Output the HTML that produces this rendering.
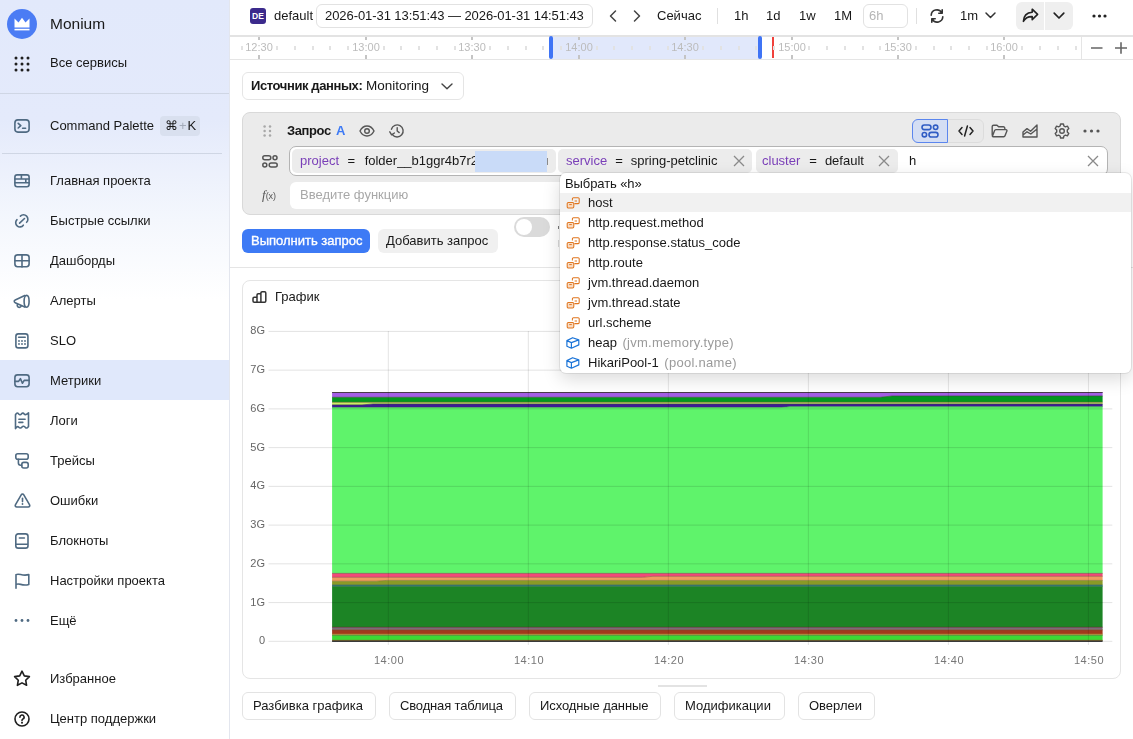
<!DOCTYPE html>
<html><head><meta charset="utf-8">
<style>
*{box-sizing:border-box;margin:0;padding:0}
html,body{width:1133px;height:739px;overflow:hidden;background:#fff}
body{position:relative;font-family:"Liberation Sans",sans-serif;font-size:13px;color:#181818}
.a{position:absolute}
.t{position:absolute;white-space:nowrap;line-height:20px;font-size:13px;will-change:transform}
svg{position:absolute;overflow:visible}
#side{position:absolute;left:0;top:0;width:230px;height:739px;border-right:1px solid #e3e6ee;
 background:linear-gradient(180deg,#e2e9fb 0px,#e4eafb 120px,#f4f7fd 220px,#ffffff 300px)}
.ic{stroke:#4f6a82;fill:none;stroke-width:1.6;stroke-linecap:round;stroke-linejoin:round}
.sep{position:absolute;height:1px;background:#cfd6e4}
</style></head>
<body>
<div id="side">
  <!-- logo -->
  <div class="a" style="left:7px;top:8.5px;width:30px;height:30px;border-radius:50%;background:#4b7cf4"></div>
  <svg style="left:14px;top:17px" width="16" height="14" viewBox="0 0 16 14">
    <path d="M0.5 1.5 L4.5 5.5 L8 0.8 L11.5 5.5 L15.5 1.5 L15.5 10.5 L0.5 10.5 Z" fill="#fff"/>
    <rect x="0.5" y="11.8" width="15" height="1.6" fill="#fff"/>
  </svg>
  <div class="t" style="left:50px;top:14px;font-size:15.5px">Monium</div>
  <!-- grid dots -->
  <svg style="left:14px;top:56px" width="16" height="16" viewBox="0 0 16 16" fill="#1f1f1f">
    <circle cx="2" cy="2" r="1.5"/><circle cx="8" cy="2" r="1.5"/><circle cx="14" cy="2" r="1.5"/>
    <circle cx="2" cy="8" r="1.5"/><circle cx="8" cy="8" r="1.5"/><circle cx="14" cy="8" r="1.5"/>
    <circle cx="2" cy="14" r="1.5"/><circle cx="8" cy="14" r="1.5"/><circle cx="14" cy="14" r="1.5"/>
  </svg>
  <div class="t" style="left:50px;top:53px">Все сервисы</div>
  <div class="sep" style="left:0;top:93px;width:229px"></div>
  <!-- command palette -->
  <svg style="left:14px;top:119px" width="16" height="14" viewBox="0 0 16 14">
    <rect class="ic" x="0.9" y="0.9" width="14.2" height="12.2" rx="3" stroke-width="1.8"/>
    <path class="ic" d="M4.2 4.4 L6.8 6.7 L4.2 9" stroke-width="1.6"/>
    <path class="ic" d="M8.6 9.3 H11.6" stroke-width="1.5"/>
  </svg>
  <div class="t" style="left:50px;top:116px">Command Palette</div>
  <div class="a" style="left:160px;top:116px;width:40px;height:20px;border-radius:4px;background:#d9e0ef"></div>
  <div class="t" style="left:165px;top:116px;font-size:13px">⌘<span style="color:#a3abba;margin:0 1px">+</span>K</div>
  <div class="sep" style="left:2px;top:153px;width:220px"></div>
  <!-- nav -->
  <div class="a" style="left:0;top:360px;width:229px;height:40px;background:#e0e8fb"></div>
  <div class="t" style="left:50px;top:171px">Главная проекта</div>
  <div class="t" style="left:50px;top:211px">Быстрые ссылки</div>
  <div class="t" style="left:50px;top:251px">Дашборды</div>
  <div class="t" style="left:50px;top:291px">Алерты</div>
  <div class="t" style="left:50px;top:331px">SLO</div>
  <div class="t" style="left:50px;top:371px">Метрики</div>
  <div class="t" style="left:50px;top:411px">Логи</div>
  <div class="t" style="left:50px;top:451px">Трейсы</div>
  <div class="t" style="left:50px;top:491px">Ошибки</div>
  <div class="t" style="left:50px;top:531px">Блокноты</div>
  <div class="t" style="left:50px;top:571px">Настройки проекта</div>
  <div class="t" style="left:50px;top:611px">Ещё</div>
  <div class="t" style="left:50px;top:669px">Избранное</div>
  <div class="t" style="left:50px;top:709px">Центр поддержки</div>
  <!-- ICONS -->
  <svg style="left:14px;top:174px" width="16" height="14" viewBox="0 0 16 14">
    <rect class="ic" x="0.9" y="0.9" width="14.2" height="11.8" rx="2.2" stroke-width="1.8"/>
    <path class="ic" d="M1 5 H15 M1 8.8 H15 M7.4 1 V5 M11.8 5 V8.8" stroke-width="1.6"/>
  </svg>
  <svg style="left:14px;top:212px" width="16" height="16" viewBox="0 0 16 16"><path class="ic" d="M6.4 4.1 A4.2 4.2 0 1 1 12.6 10.3 M3.0 7.7 A4.2 4.2 0 1 0 9.3 13.2 M5.6 11.1 L10.5 6.5" stroke-width="1.6"/></svg>
  <svg style="left:14px;top:254px" width="16" height="14" viewBox="0 0 16 14">
    <rect class="ic" x="0.9" y="0.9" width="14.2" height="11.8" rx="2.6" stroke-width="1.8"/>
    <path class="ic" d="M1 6.8 H15 M8 1 V13" stroke-width="1.7"/>
  </svg>
  <svg style="left:12px;top:293px" width="18" height="16" viewBox="0 0 18 16"><path class="ic" d="M12.8 2.6 L3.2 6.9 A1.5 1.5 0 0 0 3.2 9.7 L12.8 14.1" stroke-width="1.5"/><ellipse class="ic" cx="14.6" cy="8.3" rx="2.5" ry="5.9" stroke-width="1.5"/><path class="ic" d="M5.4 11.6 A2 2 0 1 0 9.2 12.8" stroke-width="1.5"/></svg>
  <svg style="left:15px;top:333px" width="14" height="16" viewBox="0 0 14 16">
    <rect class="ic" x="0.9" y="0.9" width="12" height="14" rx="2.4" stroke-width="1.7"/>
    <path class="ic" d="M3.6 4.2 H10.2" stroke-width="1.8"/>
    <g fill="#4f6a82"><circle cx="4" cy="8" r="0.9"/><circle cx="7" cy="8" r="0.9"/><circle cx="10" cy="8" r="0.9"/><circle cx="4" cy="11" r="0.9"/><circle cx="7" cy="11" r="0.9"/><circle cx="10" cy="11" r="0.9"/></g>
  </svg>
  <svg style="left:14px;top:374px" width="16" height="14" viewBox="0 0 16 14">
    <rect class="ic" x="0.9" y="0.9" width="14.2" height="11.8" rx="2.6" stroke-width="1.8"/>
    <path class="ic" d="M1 7.4 H4.6 L6.4 4.6 L8.4 9.2 L10.2 6.4 H15" stroke-width="1.5"/>
  </svg>
  <svg style="left:14px;top:412px" width="16" height="18" viewBox="0 0 16 18"><path class="ic" d="M1.5 16.6 V2.6 C2.3 1.2 3.3 0.6 4.2 1.4 C5.2 2.6 6.4 3.4 7.6 1.8 C8.4 0.7 9.4 1 10.2 2 C11.2 3.3 12.6 2.6 14.5 0.8 V14.6 C13.6 15.8 12.4 16.6 11.4 15.4 C10.4 14.2 9 13.8 8 15 C7 16.2 5.8 16.4 4.8 15.2 C3.8 14 2.8 14.6 1.5 16.6 Z M4.9 7.2 H11.1 M4.9 10.4 H8.8" stroke-width="1.6"/></svg>
  <svg style="left:15px;top:453px" width="14" height="16" viewBox="0 0 14 16">
    <rect class="ic" x="0.8" y="0.8" width="12.4" height="5.4" rx="2" stroke-width="1.6"/>
    <rect class="ic" x="6.8" y="9.4" width="6.4" height="5.6" rx="2" stroke-width="1.6"/>
    <path class="ic" d="M3.4 6.2 V10 A2.2 2.2 0 0 0 5.6 12.2 H6.8" stroke-width="1.6"/>
  </svg>
  <svg style="left:14px;top:493px" width="17" height="15" viewBox="0 0 17 15">
    <path class="ic" d="M7.2 1.8 A1.5 1.5 0 0 1 9.8 1.8 L15.6 11.8 A1.5 1.5 0 0 1 14.3 14 H2.7 A1.5 1.5 0 0 1 1.4 11.8 Z" stroke-width="1.6"/>
    <path class="ic" d="M8.5 5.4 V8.6" stroke-width="1.6"/>
    <circle cx="8.5" cy="11" r="0.9" fill="#4f6a82"/>
  </svg>
  <svg style="left:15px;top:533px" width="14" height="16" viewBox="0 0 14 16">
    <path class="ic" d="M3.2 0.9 H10.6 A2.4 2.4 0 0 1 13 3.3 V12.7 A2.4 2.4 0 0 1 10.6 15.1 H3.2 A2.4 2.4 0 0 1 0.8 12.7 V3.3 A2.4 2.4 0 0 1 3.2 0.9 Z M1 11.2 H13 M4.4 5 H9.4" stroke-width="1.6"/>
  </svg>
  <svg style="left:15px;top:573px" width="15" height="16" viewBox="0 0 15 16">
    <path class="ic" d="M1 15.2 V1.6 C4.5 -0.2 7 3.6 13.8 1.6 V11.4 C7 13.4 4.5 9.6 1 11.4" stroke-width="1.6"/>
  </svg>
  <svg style="left:14px;top:618px" width="16" height="5" viewBox="0 0 16 5" fill="#4f6a82">
    <circle cx="2" cy="2.5" r="1.4"/><circle cx="8" cy="2.5" r="1.4"/><circle cx="14" cy="2.5" r="1.4"/>
  </svg>
  <svg style="left:13px;top:670px" width="18" height="17" viewBox="0 0 18 17">
    <path d="M9 1.2 L11.3 5.9 L16.4 6.6 L12.7 10.2 L13.6 15.3 L9 12.9 L4.4 15.3 L5.3 10.2 L1.6 6.6 L6.7 5.9 Z" fill="none" stroke="#1f1f1f" stroke-width="1.6" stroke-linejoin="round"/>
  </svg>
  <svg style="left:14px;top:711px" width="16" height="16" viewBox="0 0 16 16">
    <circle cx="8" cy="8" r="7" fill="none" stroke="#1f1f1f" stroke-width="1.6"/>
    <path d="M5.9 6.2 A2.1 2.1 0 1 1 8.8 8.1 C8.2 8.4 8 8.8 8 9.6" fill="none" stroke="#1f1f1f" stroke-width="1.6" stroke-linecap="round"/>
    <circle cx="8" cy="11.7" r="1" fill="#1f1f1f"/>
  </svg>
</div>
<!-- MAIN -->
<!-- top bar -->
<div class="a" style="left:250px;top:8px;width:16px;height:16px;border-radius:3px;background:#3b2a8c;color:#fff;font-size:8.5px;font-weight:bold;line-height:16px;text-align:center">DE</div>
<div class="t" style="left:274px;top:5.5px">default</div>
<div class="a" style="left:316px;top:4px;width:277px;height:24px;border:1px solid #e2e2e2;border-radius:6px"></div>
<div class="t" style="left:324.5px;top:5.5px;letter-spacing:-0.07px">2026-01-31 13:51:43 — 2026-01-31 14:51:43</div>
<svg style="left:609px;top:10px" width="8" height="12" viewBox="0 0 8 12"><path d="M6.5 1 L1.5 6 L6.5 11" fill="none" stroke="#444" stroke-width="1.5" stroke-linecap="round" stroke-linejoin="round"/></svg>
<svg style="left:633px;top:10px" width="8" height="12" viewBox="0 0 8 12"><path d="M1.5 1 L6.5 6 L1.5 11" fill="none" stroke="#444" stroke-width="1.5" stroke-linecap="round" stroke-linejoin="round"/></svg>
<div class="t" style="left:657px;top:5.5px">Сейчас</div>
<div class="a" style="left:717px;top:8px;width:1px;height:16px;background:#e0e0e0"></div>
<div class="t" style="left:734px;top:5.5px">1h</div>
<div class="t" style="left:766px;top:5.5px">1d</div>
<div class="t" style="left:799px;top:5.5px">1w</div>
<div class="t" style="left:834px;top:5.5px">1M</div>
<div class="a" style="left:863px;top:4px;width:45px;height:24px;border:1px solid #e2e2e2;border-radius:6px"></div>
<div class="t" style="left:869px;top:5.5px;color:#b5b5b5">6h</div>
<div class="a" style="left:916px;top:8px;width:1px;height:16px;background:#e0e0e0"></div>
<svg style="left:929px;top:9px" width="16" height="14" viewBox="0 0 16 14"><path d="M2.2 6.2 A5.6 5.6 0 0 1 12.6 3.6 M13.8 7.8 A5.6 5.6 0 0 1 3.4 10.4 M13.2 0.8 V4.2 H9.8 M2.8 13.2 V9.8 H6.2" fill="none" stroke="#333" stroke-width="1.6" stroke-linecap="round" stroke-linejoin="round"/></svg>
<div class="t" style="left:960px;top:5.5px">1m</div>
<svg style="left:985px;top:12px" width="11" height="7" viewBox="0 0 11 7"><path d="M1 1 L5.5 5.5 L10 1" fill="none" stroke="#333" stroke-width="1.5" stroke-linecap="round" stroke-linejoin="round"/></svg>
<div class="a" style="left:1016px;top:2px;width:57px;height:28px;border-radius:6px;background:#efefef"></div>
<div class="a" style="left:1044px;top:2px;width:1px;height:28px;background:#fff"></div>
<svg style="left:1022px;top:8px" width="17" height="15" viewBox="0 0 17 15"><path d="M10.2 1.2 L15.6 6.4 L10.2 11.6 V8.6 C6 8.4 3.4 9.8 1.4 13.4 C1.6 7.6 4.6 4.6 10.2 4.2 Z" fill="none" stroke="#222" stroke-width="1.6" stroke-linejoin="round"/></svg>
<svg style="left:1053px;top:12px" width="12" height="8" viewBox="0 0 12 8"><path d="M1.2 1.2 L6 6 L10.8 1.2" fill="none" stroke="#222" stroke-width="1.7" stroke-linecap="round" stroke-linejoin="round"/></svg>
<svg style="left:1092px;top:14px" width="15" height="4" viewBox="0 0 15 4" fill="#222"><circle cx="2" cy="2" r="1.6"/><circle cx="7.5" cy="2" r="1.6"/><circle cx="13" cy="2" r="1.6"/></svg>
<!-- timeline -->
<div class="a" style="left:230px;top:35px;width:903px;height:25px;border-top:2px solid #e3e3e3;border-bottom:1px solid #e5e5e5"></div>
<div class="a" style="left:553px;top:37px;width:206px;height:22px;background:#e1e8fb"></div>
<div class="a" style="left:549px;top:36px;width:4px;height:23px;border-radius:2px;background:#3f74f5"></div>
<div class="a" style="left:758px;top:36px;width:4px;height:23px;border-radius:2px;background:#3f74f5"></div>
<div class="a" style="left:772px;top:37px;width:2px;height:21px;background:#f0423c"></div>
<div class="a" style="left:1081px;top:37px;width:1px;height:22px;background:#e5e5e5"></div>
<svg style="left:1090px;top:42px" width="38" height="12" viewBox="0 0 38 12"><path d="M1 6 H12.5 M25 6 H37 M31 0.2 V11.8" fill="none" stroke="#666" stroke-width="1.6"/></svg>
<div id="ticks">
<div class="a" style="left:240.7px;top:46px;width:2px;height:4px;background:#e2e2e2"></div>
<div class="a" style="left:258.2px;top:37px;width:2px;height:3px;background:#c4c4c4"></div>
<div class="a" style="left:258.2px;top:55px;width:2px;height:4px;background:#c4c4c4"></div>
<div class="t" style="left:239.2px;top:37px;width:40px;text-align:center;font-size:11px;color:#bcbcbc">12:30</div>
<div class="a" style="left:276.2px;top:46px;width:2px;height:4px;background:#e2e2e2"></div>
<div class="a" style="left:293.9px;top:46px;width:2px;height:4px;background:#e2e2e2"></div>
<div class="a" style="left:311.7px;top:46px;width:2px;height:4px;background:#e2e2e2"></div>
<div class="a" style="left:329.4px;top:46px;width:2px;height:4px;background:#e2e2e2"></div>
<div class="a" style="left:347.2px;top:46px;width:2px;height:4px;background:#e2e2e2"></div>
<div class="a" style="left:364.6px;top:37px;width:2px;height:3px;background:#c4c4c4"></div>
<div class="a" style="left:364.6px;top:55px;width:2px;height:4px;background:#c4c4c4"></div>
<div class="t" style="left:345.6px;top:37px;width:40px;text-align:center;font-size:11px;color:#bcbcbc">13:00</div>
<div class="a" style="left:382.6px;top:46px;width:2px;height:4px;background:#e2e2e2"></div>
<div class="a" style="left:400.4px;top:46px;width:2px;height:4px;background:#e2e2e2"></div>
<div class="a" style="left:418.1px;top:46px;width:2px;height:4px;background:#e2e2e2"></div>
<div class="a" style="left:435.9px;top:46px;width:2px;height:4px;background:#e2e2e2"></div>
<div class="a" style="left:453.6px;top:46px;width:2px;height:4px;background:#e2e2e2"></div>
<div class="a" style="left:471.1px;top:37px;width:2px;height:3px;background:#c4c4c4"></div>
<div class="a" style="left:471.1px;top:55px;width:2px;height:4px;background:#c4c4c4"></div>
<div class="t" style="left:452.1px;top:37px;width:40px;text-align:center;font-size:11px;color:#bcbcbc">13:30</div>
<div class="a" style="left:489.1px;top:46px;width:2px;height:4px;background:#e2e2e2"></div>
<div class="a" style="left:506.8px;top:46px;width:2px;height:4px;background:#e2e2e2"></div>
<div class="a" style="left:524.6px;top:46px;width:2px;height:4px;background:#e2e2e2"></div>
<div class="a" style="left:542.3px;top:46px;width:2px;height:4px;background:#e2e2e2"></div>
<div class="a" style="left:560.1px;top:46px;width:2px;height:4px;background:#e2e2e2"></div>
<div class="a" style="left:577.5px;top:37px;width:2px;height:3px;background:#c4c4c4"></div>
<div class="a" style="left:577.5px;top:55px;width:2px;height:4px;background:#c4c4c4"></div>
<div class="t" style="left:558.5px;top:37px;width:40px;text-align:center;font-size:11px;color:#bcbcbc">14:00</div>
<div class="a" style="left:595.5px;top:46px;width:2px;height:4px;background:#e2e2e2"></div>
<div class="a" style="left:613.3px;top:46px;width:2px;height:4px;background:#e2e2e2"></div>
<div class="a" style="left:631.0px;top:46px;width:2px;height:4px;background:#e2e2e2"></div>
<div class="a" style="left:648.8px;top:46px;width:2px;height:4px;background:#e2e2e2"></div>
<div class="a" style="left:666.5px;top:46px;width:2px;height:4px;background:#e2e2e2"></div>
<div class="a" style="left:684.0px;top:37px;width:2px;height:3px;background:#c4c4c4"></div>
<div class="a" style="left:684.0px;top:55px;width:2px;height:4px;background:#c4c4c4"></div>
<div class="t" style="left:665.0px;top:37px;width:40px;text-align:center;font-size:11px;color:#bcbcbc">14:30</div>
<div class="a" style="left:702.0px;top:46px;width:2px;height:4px;background:#e2e2e2"></div>
<div class="a" style="left:719.7px;top:46px;width:2px;height:4px;background:#e2e2e2"></div>
<div class="a" style="left:737.5px;top:46px;width:2px;height:4px;background:#e2e2e2"></div>
<div class="a" style="left:755.2px;top:46px;width:2px;height:4px;background:#e2e2e2"></div>
<div class="a" style="left:773.0px;top:46px;width:2px;height:4px;background:#e2e2e2"></div>
<div class="a" style="left:790.5px;top:37px;width:2px;height:3px;background:#c4c4c4"></div>
<div class="a" style="left:790.5px;top:55px;width:2px;height:4px;background:#c4c4c4"></div>
<div class="t" style="left:771.5px;top:37px;width:40px;text-align:center;font-size:11px;color:#bcbcbc">15:00</div>
<div class="a" style="left:808.4px;top:46px;width:2px;height:4px;background:#e2e2e2"></div>
<div class="a" style="left:826.2px;top:46px;width:2px;height:4px;background:#e2e2e2"></div>
<div class="a" style="left:843.9px;top:46px;width:2px;height:4px;background:#e2e2e2"></div>
<div class="a" style="left:861.7px;top:46px;width:2px;height:4px;background:#e2e2e2"></div>
<div class="a" style="left:879.4px;top:46px;width:2px;height:4px;background:#e2e2e2"></div>
<div class="a" style="left:896.9px;top:37px;width:2px;height:3px;background:#c4c4c4"></div>
<div class="a" style="left:896.9px;top:55px;width:2px;height:4px;background:#c4c4c4"></div>
<div class="t" style="left:877.9px;top:37px;width:40px;text-align:center;font-size:11px;color:#bcbcbc">15:30</div>
<div class="a" style="left:914.9px;top:46px;width:2px;height:4px;background:#e2e2e2"></div>
<div class="a" style="left:932.6px;top:46px;width:2px;height:4px;background:#e2e2e2"></div>
<div class="a" style="left:950.4px;top:46px;width:2px;height:4px;background:#e2e2e2"></div>
<div class="a" style="left:968.1px;top:46px;width:2px;height:4px;background:#e2e2e2"></div>
<div class="a" style="left:985.9px;top:46px;width:2px;height:4px;background:#e2e2e2"></div>
<div class="a" style="left:1003.4px;top:37px;width:2px;height:3px;background:#c4c4c4"></div>
<div class="a" style="left:1003.4px;top:55px;width:2px;height:4px;background:#c4c4c4"></div>
<div class="t" style="left:984.4px;top:37px;width:40px;text-align:center;font-size:11px;color:#bcbcbc">16:00</div>
<div class="a" style="left:1021.3px;top:46px;width:2px;height:4px;background:#e2e2e2"></div>
<div class="a" style="left:1039.1px;top:46px;width:2px;height:4px;background:#e2e2e2"></div>
<div class="a" style="left:1056.8px;top:46px;width:2px;height:4px;background:#e2e2e2"></div>
<div class="a" style="left:1074.6px;top:46px;width:2px;height:4px;background:#e2e2e2"></div>
</div>
<!-- MAIN2 -->
<!-- data source -->
<div class="a" style="left:242px;top:72px;width:222px;height:28px;border:1px solid #e5e5e5;border-radius:6px"></div>
<div class="t" style="left:251px;top:75.5px"><b style="letter-spacing:-0.4px">Источник данных:</b> <span style="font-size:13.5px">Monitoring</span></div>
<svg style="left:441px;top:83px" width="12" height="7" viewBox="0 0 12 7"><path d="M1 1 L6 5.8 L11 1" fill="none" stroke="#444" stroke-width="1.4" stroke-linecap="round" stroke-linejoin="round"/></svg>
<!-- query box -->
<div class="a" style="left:242px;top:112px;width:879px;height:103px;border:1px solid #d9d9d9;border-radius:8px;background:#ebebeb"></div>
<svg style="left:263px;top:125px" width="9" height="12" viewBox="0 0 9 12" fill="#a8a8a8"><circle cx="1.6" cy="1.6" r="1.25"/><circle cx="7" cy="1.6" r="1.25"/><circle cx="1.6" cy="6" r="1.25"/><circle cx="7" cy="6" r="1.25"/><circle cx="1.6" cy="10.4" r="1.25"/><circle cx="7" cy="10.4" r="1.25"/></svg>
<div class="t" style="left:287px;top:120.5px"><b style="letter-spacing:-0.4px">Запрос</b> <b style="color:#3d7af5;margin-left:1.5px">A</b></div>
<svg style="left:359px;top:125px" width="16" height="12" viewBox="0 0 16 12"><path d="M1 6 C3 2 5.5 1 8 1 C10.5 1 13 2 15 6 C13 10 10.5 11 8 11 C5.5 11 3 10 1 6 Z" fill="none" stroke="#555" stroke-width="1.4"/><circle cx="8" cy="6" r="2.3" fill="none" stroke="#555" stroke-width="1.4"/></svg>
<svg style="left:389px;top:124px" width="16" height="14" viewBox="0 0 16 14"><path d="M3.4 10.6 A6 6 0 1 0 2.4 5.2" fill="none" stroke="#555" stroke-width="1.4" stroke-linecap="round"/><path d="M0.8 7.8 L2.6 10.8 L5.4 9" fill="none" stroke="#555" stroke-width="1.4" stroke-linecap="round" stroke-linejoin="round"/><path d="M8.2 3.6 V7 L10.2 8.6" fill="none" stroke="#555" stroke-width="1.4" stroke-linecap="round"/></svg>
<!-- toolbar -->
<div class="a" style="left:912px;top:119px;width:72px;height:24px;border:1px solid #dcdcdc;border-radius:6px;background:#e9e9e9"></div>
<div class="a" style="left:912px;top:119px;width:36px;height:24px;border:1px solid #5b86ee;border-radius:6px 0 0 6px;background:#d4def4"></div>
<svg style="left:921px;top:124px" width="18" height="14" viewBox="0 0 18 14"><rect x="1" y="1" width="9" height="4.6" rx="2.3" fill="none" stroke="#2f5cc4" stroke-width="1.6"/><circle cx="14.6" cy="3.3" r="2.2" fill="none" stroke="#2f5cc4" stroke-width="1.6"/><circle cx="3.4" cy="10.7" r="2.2" fill="none" stroke="#2f5cc4" stroke-width="1.6"/><rect x="8" y="8.4" width="9" height="4.6" rx="2.3" fill="none" stroke="#2f5cc4" stroke-width="1.6"/></svg>
<svg style="left:958px;top:125px" width="16" height="12" viewBox="0 0 16 12"><path d="M4 2.6 L1 6 L4 9.4 M12 2.6 L15 6 L12 9.4 M9.4 1 L6.6 11" fill="none" stroke="#222" stroke-width="1.5" stroke-linecap="round" stroke-linejoin="round"/></svg>
<svg style="left:991px;top:124px" width="17" height="14" viewBox="0 0 17 14"><path d="M1.2 11.6 V2.6 A1.4 1.4 0 0 1 2.6 1.2 H6 L7.6 2.8 H12.4 A1.4 1.4 0 0 1 13.8 4.2 V5.4 M1.4 12.2 L3.6 6.6 A1.4 1.4 0 0 1 4.9 5.6 H15 A1 1 0 0 1 15.9 7 L14 11.8 A1.4 1.4 0 0 1 12.7 12.8 H2 Z" fill="none" stroke="#555" stroke-width="1.4" stroke-linejoin="round"/></svg>
<svg style="left:1022px;top:124px" width="16" height="14" viewBox="0 0 16 14"><path d="M1 13 V8 L5 4.6 L8.6 7.2 L15 1 V13 Z M1 11 L5 7.8 L8.8 10 L15 5" fill="none" stroke="#555" stroke-width="1.4" stroke-linejoin="round"/></svg>
<svg style="left:1054px;top:123px" width="16" height="16" viewBox="0 0 16 16"><path d="M6.6 1 H9.4 L9.9 3 L11.4 3.8 L13.4 3.1 L14.8 5.5 L13.3 7 V8.9 L14.8 10.4 L13.4 12.8 L11.4 12.2 L9.9 13 L9.4 15 H6.6 L6.1 13 L4.6 12.2 L2.6 12.8 L1.2 10.4 L2.7 8.9 V7 L1.2 5.5 L2.6 3.1 L4.6 3.8 L6.1 3 Z" fill="none" stroke="#555" stroke-width="1.4" stroke-linejoin="round"/><circle cx="8" cy="8" r="2.3" fill="none" stroke="#555" stroke-width="1.4"/></svg>
<svg style="left:1083px;top:128.5px" width="17" height="4" viewBox="0 0 17 4" fill="#555"><circle cx="2" cy="2" r="1.6"/><circle cx="8.5" cy="2" r="1.6"/><circle cx="15" cy="2" r="1.6"/></svg>
<!-- filter row -->
<svg style="left:262px;top:155px" width="16" height="13" viewBox="0 0 16 13"><rect x="0.8" y="0.8" width="8" height="4" rx="2" fill="none" stroke="#555" stroke-width="1.5"/><circle cx="13" cy="2.8" r="2" fill="none" stroke="#555" stroke-width="1.5"/><circle cx="2.8" cy="10" r="2" fill="none" stroke="#555" stroke-width="1.5"/><rect x="7.2" y="8" width="8" height="4" rx="2" fill="none" stroke="#555" stroke-width="1.5"/></svg>
<div class="a" style="left:289px;top:146px;width:819px;height:30px;border:1px solid #b4b4b4;border-radius:7px;background:#fff"></div>
<div class="a" style="left:291.5px;top:149px;width:264px;height:24px;border-radius:5px;background:#ececec"></div>
<div class="t" style="left:300px;top:150.5px;width:247px;overflow:hidden"><span style="color:#7a3fb8">project</span><span style="margin:0 9.5px 0 8.5px">=</span>folder__b1ggr4b7r2</div>
<div class="a" style="left:474.5px;top:151.3px;width:72px;height:21px;background:#c9dbf8"></div>
<div class="a" style="left:546.5px;top:158px;width:1.6px;height:7px;background:#8a8a8a"></div>
<div class="a" style="left:558.2px;top:149px;width:194.3px;height:24px;border-radius:5px;background:#ececec"></div>
<div class="t" style="left:566px;top:150.5px"><span style="color:#7a3fb8">service</span><span style="margin:0 8px 0 8px">=</span>spring-petclinic</div>
<svg style="left:733px;top:155px" width="12" height="12" viewBox="0 0 12 12"><path d="M1 1 L11 11 M11 1 L1 11" stroke="#8a8a8a" stroke-width="1.3"/></svg>
<div class="a" style="left:755.5px;top:149px;width:142.5px;height:24px;border-radius:5px;background:#ececec"></div>
<div class="t" style="left:762px;top:150.5px"><span style="color:#7a3fb8">cluster</span><span style="margin:0 8px 0 9px">=</span>default</div>
<svg style="left:878px;top:155px" width="12" height="12" viewBox="0 0 12 12"><path d="M1 1 L11 11 M11 1 L1 11" stroke="#8a8a8a" stroke-width="1.3"/></svg>
<div class="t" style="left:908.5px;top:150.5px">h</div>
<svg style="left:1087px;top:155px" width="12" height="12" viewBox="0 0 12 12"><path d="M1 1 L11 11 M11 1 L1 11" stroke="#8a8a8a" stroke-width="1.3"/></svg>
<!-- function row -->
<div class="t" style="left:262px;top:184.5px;font-family:'Liberation Serif',serif;font-style:italic;font-size:13px;color:#555">f<span style="font-size:9px;font-style:normal;font-family:'Liberation Sans',sans-serif">(x)</span></div>
<div class="a" style="left:290px;top:182px;width:818px;height:27px;border-radius:6px;background:#fff"></div>
<div class="t" style="left:300px;top:185px;color:#a8a8a8">Введите функцию</div>
<!-- buttons -->
<div class="a" style="left:242px;top:229px;width:128px;height:24px;border-radius:6px;background:#3d7af5"></div>
<div class="t" style="left:250.5px;top:231px;color:#fff;-webkit-text-stroke:0.35px #fff">Выполнить запрос</div>
<div class="a" style="left:378px;top:229px;width:119.5px;height:24px;border-radius:6px;background:#f0f0f0"></div>
<div class="t" style="left:386px;top:231px">Добавить запрос</div>
<div class="a" style="left:514px;top:217px;width:36px;height:20px;border-radius:10px;background:#dadada"></div>
<div class="a" style="left:516px;top:219px;width:16px;height:16px;border-radius:50%;background:#fff"></div>
<div class="a" style="left:230px;top:267px;width:903px;height:1px;background:#e5e5e5"></div>
<div class="a" style="left:557.8px;top:225.5px;width:1.3px;height:3.5px;background:#777"></div>
<div class="a" style="left:557.8px;top:240px;width:1.3px;height:6.5px;background:#d8d8d8"></div>
<!-- CHART -->
<div class="a" style="left:242px;top:280px;width:879px;height:399px;border:1px solid #e5e5e5;border-radius:8px"></div>
<svg style="left:251.5px;top:291px" width="15" height="12" viewBox="0 0 15 12"><path d="M5 11.2 H2.2 A1.2 1.2 0 0 1 1 10 V7.4 A1.2 1.2 0 0 1 2.2 6.2 H5 Z M5 11.2 V4 A1.2 1.2 0 0 1 6.2 2.8 H8.9 V11.2 M8.9 11.2 V2 A1.2 1.2 0 0 1 10.1 0.8 H12.6 A1.2 1.2 0 0 1 13.8 2 V10 A1.2 1.2 0 0 1 12.6 11.2 H2.2" fill="none" stroke="#333" stroke-width="1.5" stroke-linejoin="round"/></svg>
<div class="t" style="left:274.5px;top:287px">График</div>
<svg style="left:0;top:0" width="1133" height="739" viewBox="0 0 1133 739">
<rect x="268.5" y="330.90" width="843.8" height="1" fill="#e3e3e3"/>
<rect x="268.5" y="369.64" width="843.8" height="1" fill="#e3e3e3"/>
<rect x="268.5" y="408.38" width="843.8" height="1" fill="#e3e3e3"/>
<rect x="268.5" y="447.12" width="843.8" height="1" fill="#e3e3e3"/>
<rect x="268.5" y="485.86" width="843.8" height="1" fill="#e3e3e3"/>
<rect x="268.5" y="524.60" width="843.8" height="1" fill="#e3e3e3"/>
<rect x="268.5" y="563.34" width="843.8" height="1" fill="#e3e3e3"/>
<rect x="268.5" y="602.08" width="843.8" height="1" fill="#e3e3e3"/>
<rect x="268.5" y="640.82" width="843.8" height="1" fill="#e3e3e3"/>
<polygon points="332.1,392.00 1102.6,392.00 1102.6,396.00 892.0,396.00 880.0,397.30 332.1,397.30" fill="#a45ee5"/>
<polygon points="332.1,397.30 880.0,397.30 892.0,396.00 1102.6,396.00 1102.6,402.30 332.1,402.30" fill="#03961f"/>
<polygon points="332.1,402.30 1102.6,402.30 1102.6,404.00 373.0,404.00 362.0,404.90 332.1,404.90" fill="#cdee63"/>
<polygon points="332.1,404.90 362.0,404.90 373.0,404.00 1102.6,404.00 1102.6,406.80 790.0,406.80 780.0,407.60 332.1,407.60" fill="#3d1b94"/>
<polygon points="332.1,407.60 780.0,407.60 790.0,406.80 1102.6,406.80 1102.6,573.40 332.1,573.40" fill="#5ff36b"/>
<polygon points="332.1,573.40 1102.6,573.40 1102.6,576.30 653.0,576.30 642.0,577.30 332.1,577.30" fill="#f24a78"/>
<polygon points="332.1,577.30 642.0,577.30 653.0,576.30 1102.6,576.30 1102.6,580.40 387.0,580.40 376.0,581.20 332.1,581.20" fill="#f09a60"/>
<polygon points="332.1,581.20 376.0,581.20 387.0,580.40 1102.6,580.40 1102.6,585.00 332.1,585.00" fill="#8a9a26"/>
<polygon points="332.1,585.00 1102.6,585.00 1102.6,586.30 332.1,586.30" fill="#3a7a7a"/>
<polygon points="332.1,586.30 1102.6,586.30 1102.6,627.30 332.1,627.30" fill="#1c8425"/>
<polygon points="332.1,627.30 1102.6,627.30 1102.6,629.80 332.1,629.80" fill="#7a6a7a"/>
<polygon points="332.1,629.80 1102.6,629.80 1102.6,634.20 332.1,634.20" fill="#a0381c"/>
<polygon points="332.1,634.20 1102.6,634.20 1102.6,635.40 332.1,635.40" fill="#7a8a2a"/>
<polygon points="332.1,635.40 1102.6,635.40 1102.6,640.30 332.1,640.30" fill="#3cd834"/>
<polygon points="332.1,640.30 1102.6,640.30 1102.6,641.80 332.1,641.80" fill="#000000"/>
<rect x="332.1" y="392" width="770.5" height="1" fill="#4a3a4a"/>
<polyline points="332.1,397.30 880.0,397.30 892.0,396.00 1102.6,396.00" fill="none" stroke="#3a5a3a" stroke-width="0.7"/>
<polyline points="332.1,402.30 1102.6,402.30" fill="none" stroke="#6a6a2a" stroke-width="0.7"/>
<polyline points="332.1,404.90 362.0,404.90 373.0,404.00 1102.6,404.00" fill="none" stroke="#3a3a5a" stroke-width="0.7"/>
<polyline points="332.1,407.60 780.0,407.60 790.0,406.80 1102.6,406.80" fill="none" stroke="#3aa04a" stroke-width="0.7"/>
<polyline points="332.1,573.40 1102.6,573.40" fill="none" stroke="#8a4a4a" stroke-width="0.7"/>
<polyline points="332.1,577.30 642.0,577.30 653.0,576.30 1102.6,576.30" fill="none" stroke="#a0504a" stroke-width="0.7"/>
<polyline points="332.1,581.20 376.0,581.20 387.0,580.40 1102.6,580.40" fill="none" stroke="#8a7a30" stroke-width="0.7"/>
<polyline points="332.1,585.00 1102.6,585.00" fill="none" stroke="#3a6a6a" stroke-width="0.7"/>
<polyline points="332.1,586.30 1102.6,586.30" fill="none" stroke="#2a6a4a" stroke-width="0.7"/>
<polyline points="332.1,627.30 1102.6,627.30" fill="none" stroke="#5a2a2a" stroke-width="0.7"/>
<polyline points="332.1,629.80 1102.6,629.80" fill="none" stroke="#6a4a3a" stroke-width="0.7"/>
<polyline points="332.1,634.20 1102.6,634.20" fill="none" stroke="#c08030" stroke-width="0.7"/>
<polyline points="332.1,635.40 1102.6,635.40" fill="none" stroke="#3a8a2a" stroke-width="0.7"/>
<polyline points="332.1,640.30 1102.6,640.30" fill="none" stroke="#8a6a2a" stroke-width="0.7"/>
<rect x="332.1" y="408.38" width="770.5" height="1" fill="rgba(0,0,0,0.12)"/>
<rect x="332.1" y="447.12" width="770.5" height="1" fill="rgba(0,0,0,0.12)"/>
<rect x="332.1" y="485.86" width="770.5" height="1" fill="rgba(0,0,0,0.12)"/>
<rect x="332.1" y="524.60" width="770.5" height="1" fill="rgba(0,0,0,0.12)"/>
<rect x="332.1" y="563.34" width="770.5" height="1" fill="rgba(0,0,0,0.12)"/>
<rect x="332.1" y="602.08" width="770.5" height="1" fill="rgba(0,0,0,0.12)"/>
<rect x="387.80" y="331" width="1" height="314" fill="rgba(0,0,0,0.11)"/>
<rect x="527.82" y="331" width="1" height="314" fill="rgba(0,0,0,0.11)"/>
<rect x="667.84" y="331" width="1" height="314" fill="rgba(0,0,0,0.11)"/>
<rect x="807.86" y="331" width="1" height="314" fill="rgba(0,0,0,0.11)"/>
<rect x="947.88" y="331" width="1" height="314" fill="rgba(0,0,0,0.11)"/>
<rect x="1087.90" y="331" width="1" height="314" fill="rgba(0,0,0,0.11)"/>
</svg>
<div class="t" style="left:224.5px;top:320.4px;width:40px;text-align:right;font-size:11px;color:#666">8G</div>
<div class="t" style="left:224.5px;top:359.1px;width:40px;text-align:right;font-size:11px;color:#666">7G</div>
<div class="t" style="left:224.5px;top:397.9px;width:40px;text-align:right;font-size:11px;color:#666">6G</div>
<div class="t" style="left:224.5px;top:436.6px;width:40px;text-align:right;font-size:11px;color:#666">5G</div>
<div class="t" style="left:224.5px;top:475.4px;width:40px;text-align:right;font-size:11px;color:#666">4G</div>
<div class="t" style="left:224.5px;top:514.1px;width:40px;text-align:right;font-size:11px;color:#666">3G</div>
<div class="t" style="left:224.5px;top:552.8px;width:40px;text-align:right;font-size:11px;color:#666">2G</div>
<div class="t" style="left:224.5px;top:591.6px;width:40px;text-align:right;font-size:11px;color:#666">1G</div>
<div class="t" style="left:224.5px;top:630.3px;width:40px;text-align:right;font-size:11px;color:#666">0</div>
<div class="t" style="left:358.6px;top:650px;width:60px;text-align:center;font-size:11px;letter-spacing:0.5px;color:#777">14:00</div>
<div class="t" style="left:498.6px;top:650px;width:60px;text-align:center;font-size:11px;letter-spacing:0.5px;color:#777">14:10</div>
<div class="t" style="left:638.6px;top:650px;width:60px;text-align:center;font-size:11px;letter-spacing:0.5px;color:#777">14:20</div>
<div class="t" style="left:778.6px;top:650px;width:60px;text-align:center;font-size:11px;letter-spacing:0.5px;color:#777">14:30</div>
<div class="t" style="left:918.6px;top:650px;width:60px;text-align:center;font-size:11px;letter-spacing:0.5px;color:#777">14:40</div>
<div class="t" style="left:1058.7px;top:650px;width:60px;text-align:center;font-size:11px;letter-spacing:0.5px;color:#777">14:50</div>
<div class="a" style="left:657.5px;top:684.5px;width:49px;height:2px;background:#e3e3e3"></div>
<div class="a" style="left:242px;top:692px;width:133.5px;height:27.5px;border:1px solid #e3e3e3;border-radius:6px"></div>
<div class="t" style="left:253px;top:695.5px">Разбивка графика</div>
<div class="a" style="left:388.5px;top:692px;width:127px;height:27.5px;border:1px solid #e3e3e3;border-radius:6px"></div>
<div class="t" style="left:400px;top:695.5px;letter-spacing:-0.15px">Сводная таблица</div>
<div class="a" style="left:528.5px;top:692px;width:132px;height:27.5px;border:1px solid #e3e3e3;border-radius:6px"></div>
<div class="t" style="left:539.5px;top:695.5px;letter-spacing:-0.1px">Исходные данные</div>
<div class="a" style="left:673.5px;top:692px;width:111px;height:27.5px;border:1px solid #e3e3e3;border-radius:6px"></div>
<div class="t" style="left:684.5px;top:695.5px">Модификации</div>
<div class="a" style="left:798px;top:692px;width:77px;height:27.5px;border:1px solid #e3e3e3;border-radius:6px"></div>
<div class="t" style="left:808.5px;top:695.5px">Оверлеи</div>
<!-- DROPDOWN -->
<div class="a" style="left:559.5px;top:172.5px;width:571px;height:200px;border-radius:6px;background:#fff;box-shadow:0 6px 18px rgba(0,0,0,0.15),0 0 0 1px rgba(0,0,0,0.08)"></div>
<div class="a" style="left:559.5px;top:193px;width:571px;height:19px;background:#f1f1f1"></div>
<div class="t" style="left:565px;top:173.5px;letter-spacing:-0.1px">Выбрать «h»</div>
<svg style="left:566px;top:197px" width="14" height="12" viewBox="0 0 14 12"><rect x="1.2" y="5.4" width="6.6" height="5.6" rx="1.2" fill="#f9dcc4" stroke="#e0761f" stroke-width="1.05"/><path d="M6.4 3.6 V1.8 A1 1 0 0 1 7.4 0.8 H12.2 A1 1 0 0 1 13.2 1.8 V5.6 A1 1 0 0 1 12.2 6.6 H8.4" fill="none" stroke="#e0761f" stroke-width="1.05"/><path d="M3.2 7.6 H5.8 M8.6 4 H11" stroke="#e0761f" stroke-width="1"/></svg>
<div class="t" style="left:588px;top:193.0px">host</div>
<svg style="left:566px;top:217px" width="14" height="12" viewBox="0 0 14 12"><rect x="1.2" y="5.4" width="6.6" height="5.6" rx="1.2" fill="#f9dcc4" stroke="#e0761f" stroke-width="1.05"/><path d="M6.4 3.6 V1.8 A1 1 0 0 1 7.4 0.8 H12.2 A1 1 0 0 1 13.2 1.8 V5.6 A1 1 0 0 1 12.2 6.6 H8.4" fill="none" stroke="#e0761f" stroke-width="1.05"/><path d="M3.2 7.6 H5.8 M8.6 4 H11" stroke="#e0761f" stroke-width="1"/></svg>
<div class="t" style="left:588px;top:213.0px">http.request.method</div>
<svg style="left:566px;top:237px" width="14" height="12" viewBox="0 0 14 12"><rect x="1.2" y="5.4" width="6.6" height="5.6" rx="1.2" fill="#f9dcc4" stroke="#e0761f" stroke-width="1.05"/><path d="M6.4 3.6 V1.8 A1 1 0 0 1 7.4 0.8 H12.2 A1 1 0 0 1 13.2 1.8 V5.6 A1 1 0 0 1 12.2 6.6 H8.4" fill="none" stroke="#e0761f" stroke-width="1.05"/><path d="M3.2 7.6 H5.8 M8.6 4 H11" stroke="#e0761f" stroke-width="1"/></svg>
<div class="t" style="left:588px;top:233.0px">http.response.status_code</div>
<svg style="left:566px;top:257px" width="14" height="12" viewBox="0 0 14 12"><rect x="1.2" y="5.4" width="6.6" height="5.6" rx="1.2" fill="#f9dcc4" stroke="#e0761f" stroke-width="1.05"/><path d="M6.4 3.6 V1.8 A1 1 0 0 1 7.4 0.8 H12.2 A1 1 0 0 1 13.2 1.8 V5.6 A1 1 0 0 1 12.2 6.6 H8.4" fill="none" stroke="#e0761f" stroke-width="1.05"/><path d="M3.2 7.6 H5.8 M8.6 4 H11" stroke="#e0761f" stroke-width="1"/></svg>
<div class="t" style="left:588px;top:253.0px">http.route</div>
<svg style="left:566px;top:277px" width="14" height="12" viewBox="0 0 14 12"><rect x="1.2" y="5.4" width="6.6" height="5.6" rx="1.2" fill="#f9dcc4" stroke="#e0761f" stroke-width="1.05"/><path d="M6.4 3.6 V1.8 A1 1 0 0 1 7.4 0.8 H12.2 A1 1 0 0 1 13.2 1.8 V5.6 A1 1 0 0 1 12.2 6.6 H8.4" fill="none" stroke="#e0761f" stroke-width="1.05"/><path d="M3.2 7.6 H5.8 M8.6 4 H11" stroke="#e0761f" stroke-width="1"/></svg>
<div class="t" style="left:588px;top:273.0px">jvm.thread.daemon</div>
<svg style="left:566px;top:297px" width="14" height="12" viewBox="0 0 14 12"><rect x="1.2" y="5.4" width="6.6" height="5.6" rx="1.2" fill="#f9dcc4" stroke="#e0761f" stroke-width="1.05"/><path d="M6.4 3.6 V1.8 A1 1 0 0 1 7.4 0.8 H12.2 A1 1 0 0 1 13.2 1.8 V5.6 A1 1 0 0 1 12.2 6.6 H8.4" fill="none" stroke="#e0761f" stroke-width="1.05"/><path d="M3.2 7.6 H5.8 M8.6 4 H11" stroke="#e0761f" stroke-width="1"/></svg>
<div class="t" style="left:588px;top:293.0px">jvm.thread.state</div>
<svg style="left:566px;top:317px" width="14" height="12" viewBox="0 0 14 12"><rect x="1.2" y="5.4" width="6.6" height="5.6" rx="1.2" fill="#f9dcc4" stroke="#e0761f" stroke-width="1.05"/><path d="M6.4 3.6 V1.8 A1 1 0 0 1 7.4 0.8 H12.2 A1 1 0 0 1 13.2 1.8 V5.6 A1 1 0 0 1 12.2 6.6 H8.4" fill="none" stroke="#e0761f" stroke-width="1.05"/><path d="M3.2 7.6 H5.8 M8.6 4 H11" stroke="#e0761f" stroke-width="1"/></svg>
<div class="t" style="left:588px;top:313.0px">url.scheme</div>
<svg style="left:566px;top:337px" width="14" height="12" viewBox="0 0 14 12"><path d="M0.9 3.6 L6.6 0.7 L12.8 2.9 L12.8 7.9 L5.4 11.2 L0.9 9.2 Z M0.9 3.6 L5.4 5.6 L12.8 2.9 M5.4 5.6 V11.2" fill="none" stroke="#1b74d8" stroke-width="1.2" stroke-linejoin="round"/></svg>
<div class="t" style="left:588px;top:333.0px">heap<span style="color:#9a9a9a;margin-left:5.5px;letter-spacing:0.28px">(jvm.memory.type)</span></div>
<svg style="left:566px;top:357px" width="14" height="12" viewBox="0 0 14 12"><path d="M0.9 3.6 L6.6 0.7 L12.8 2.9 L12.8 7.9 L5.4 11.2 L0.9 9.2 Z M0.9 3.6 L5.4 5.6 L12.8 2.9 M5.4 5.6 V11.2" fill="none" stroke="#1b74d8" stroke-width="1.2" stroke-linejoin="round"/></svg>
<div class="t" style="left:588px;top:353.0px">HikariPool-1<span style="color:#9a9a9a;margin-left:5.5px;letter-spacing:0.28px">(pool.name)</span></div>
</body></html>
